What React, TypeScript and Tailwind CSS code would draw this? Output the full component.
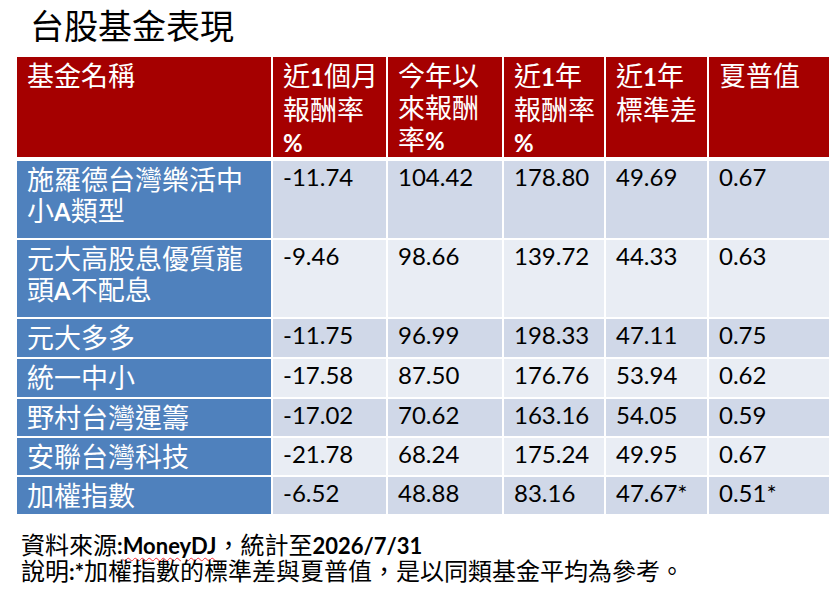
import React from "react";

const cjk = "font-['Noto_Sans_CJK_TC',sans-serif]";
const num = "font-['Lato','Noto_Sans_CJK_TC',sans-serif]";

const headers: string[][] = [
  ["基金名稱"],
  ["近1個月", "報酬率", "%"],
  ["今年以", "來報酬", "率%"],
  ["近1年", "報酬率", "%"],
  ["近1年", "標準差"],
  ["夏普值"],
];

const rows: { name: string[]; h: string; bg: string; vals: string[] }[] = [
  { name: ["施羅德台灣樂活中", "小A類型"], h: "h-[77px]", bg: "bg-[#d0d8e8]", vals: ["-11.74", "104.42", "178.80", "49.69", "0.67"] },
  { name: ["元大高股息優質龍", "頭A不配息"], h: "h-[77px]", bg: "bg-[#e9edf4]", vals: ["-9.46", "98.66", "139.72", "44.33", "0.63"] },
  { name: ["元大多多"], h: "h-[38px]", bg: "bg-[#d0d8e8]", vals: ["-11.75", "96.99", "198.33", "47.11", "0.75"] },
  { name: ["統一中小"], h: "h-[38px]", bg: "bg-[#e9edf4]", vals: ["-17.58", "87.50", "176.76", "53.94", "0.62"] },
  { name: ["野村台灣運籌"], h: "h-[37px]", bg: "bg-[#d0d8e8]", vals: ["-17.02", "70.62", "163.16", "54.05", "0.59"] },
  { name: ["安聯台灣科技"], h: "h-[37px]", bg: "bg-[#e9edf4]", vals: ["-21.78", "68.24", "175.24", "49.95", "0.67"] },
  { name: ["加權指數"], h: "h-[37px]", bg: "bg-[#d0d8e8]", vals: ["-6.52", "48.88", "83.16", "47.67*", "0.51*"] },
];

// latin bits (1, A, %) are bold and a bit smaller than the CJK around them
function Mixed({ text, latin }: { text: string; latin: string }) {
  const parts = text.split(/([A-Za-z0-9%*:/]+)/);
  return (
    <>
      {parts.map((p, i) =>
        /[A-Za-z0-9%*:]/.test(p) ? (
          <span key={i} className={latin}>{p}</span>
        ) : (
          <span key={i}>{p}</span>
        )
      )}
    </>
  );
}

const cellLatin = "font-['Lato',sans-serif] font-bold text-[24px]";
const noteLatin = "font-['Lato',sans-serif] font-bold text-[22px]";

export default function App() {
  return (
    <div className={`w-[840px] h-[597px] overflow-hidden bg-white text-black ${cjk}`}>
      <h1 className="pl-[30px] pt-[5px] text-[34px] leading-[40px] font-normal">台股基金表現</h1>

      <div className="ml-[17px] mt-[12px] w-[812px]">
        <div className="grid grid-cols-[254px_113px_114px_100px_101px_120px] gap-[2px]">
          {headers.map((lines, i) => (
            <div key={i} className="h-[100px] bg-[#a50000] pl-[10px] pt-[2px] text-[27px] leading-[32px] text-white">
              {lines.map((l, j) => (
                <div key={j} className="whitespace-nowrap">
                  <Mixed text={l} latin={cellLatin} />
                </div>
              ))}
            </div>
          ))}
        </div>

        <div className="mt-[4px] grid grid-cols-[254px_113px_114px_100px_101px_120px] gap-[2px]">
          {rows.map((r, i) => (
            <React.Fragment key={i}>
              <div className={`${r.h} bg-[#4f81bd] pl-[10px] pt-[2px] text-[27px] leading-[31px] text-white`}>
                {r.name.map((l, j) => (
                  <div key={j} className="whitespace-nowrap">
                    <Mixed text={l} latin={cellLatin} />
                  </div>
                ))}
              </div>
              {r.vals.map((v, j) => (
                <div key={j} className={`${r.h} ${r.bg} pl-[10px] text-[24px] leading-[31px] ${num}`}>
                  {v}
                </div>
              ))}
            </React.Fragment>
          ))}
        </div>
      </div>

      <div className="pl-[21px] mt-[18px] text-[24px] leading-[24px]">
        <div className="whitespace-nowrap">
          資料來源
          <span className={noteLatin}>:</span>
          <span className={`${noteLatin} underline decoration-wavy decoration-red-500 decoration-1 underline-offset-[3px]`}>MoneyDJ</span>
          ，統計至
          <span className={noteLatin}>2026/7/31</span>
        </div>
        <div className="whitespace-nowrap">
          說明<span className={noteLatin}>:*</span>加權指數的標準差與夏普值，是以同類基金平均為參考。
        </div>
      </div>
    </div>
  );
}
